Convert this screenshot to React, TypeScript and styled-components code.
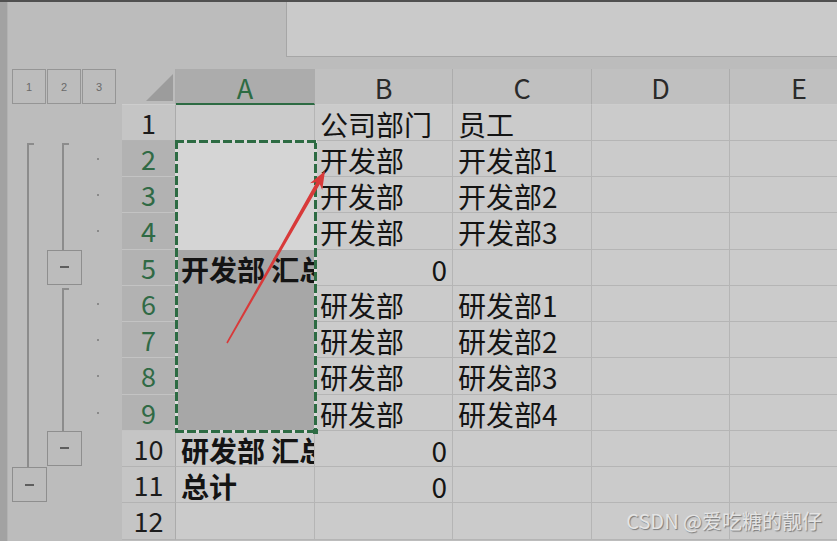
import React from 'react';
import styled, { createGlobalStyle, css } from 'styled-components';

const ROW_H = 36.25;
const HEAD_H = 35.5;
const ROWS = `${HEAD_H}px repeat(12, ${ROW_H}px)`;
const GREEN = '#2d6b43';

type Shade = 'plain' | 'active' | 'selected';

interface IRow {
	a?: string;
	b?: string;
	c?: string;
	bold?: boolean;
	numeric?: boolean;
}

const rows: IRow[] = [
	{ b: '公司部门', c: '员工' },
	{ b: '开发部', c: '开发部1' },
	{ b: '开发部', c: '开发部2' },
	{ b: '开发部', c: '开发部3' },
	{ a: '开发部 汇总', b: '0', bold: true, numeric: true },
	{ b: '研发部', c: '研发部1' },
	{ b: '研发部', c: '研发部2' },
	{ b: '研发部', c: '研发部3' },
	{ b: '研发部', c: '研发部4' },
	{ a: '研发部 汇总', b: '0', bold: true, numeric: true },
	{ a: '总计', b: '0', bold: true, numeric: true },
	{},
];

const columns = ['A', 'B', 'C', 'D', 'E'];

// rows 2..9 of column A are the selected range
const SEL_FROM = 2;
const SEL_TO = 9;

const GlobalStyle = createGlobalStyle`
  html, body {
    margin: 0;
    padding: 0;
    background: #bcbcbc;
    overflow: hidden;
  }

  body {
    font-family: "Noto Sans CJK SC", "Noto Sans", sans-serif;
  }
`;

const App: React.FC = (): JSX.Element => {
	const selected = rows.slice(SEL_FROM - 1, SEL_TO);

	return (
		<>
			<GlobalStyle/>
			<Window>
				<TopEdge/>
				<Body>
					<SideStrip/>
					<Main>
						<TopBar>
							<FormulaBox/>
						</TopBar>

						<Sheet>
							<Outline>
								<LevelButton $col={1}>1</LevelButton>
								<LevelButton $col={2}>2</LevelButton>
								<LevelButton $col={3}>3</LevelButton>

								<Rail $col={1} $from={2} $to={10}/>
								<Toggle $col={1} $row={11}><MinusBar/></Toggle>

								<Rail $col={2} $from={2} $to={4}/>
								<Toggle $col={2} $row={5}><MinusBar/></Toggle>
								<Rail $col={2} $from={6} $to={9}/>
								<Toggle $col={2} $row={10}><MinusBar/></Toggle>

								{[2, 3, 4, 6, 7, 8, 9].map((r) => <Dot key={r} $row={r}/>)}
							</Outline>

							<Table>
								<Corner><CornerMark/></Corner>
								{columns.map((c) => (
									<ColHeader key={c} $active={c === 'A'}>{c}</ColHeader>
								))}

								{rows.map((row, i) => {
									const n = i + 1;
									const inRange = n >= SEL_FROM && n <= SEL_TO;
									return (
										<React.Fragment key={n}>
											<RowHeader $active={inRange}>{n}</RowHeader>
											{
												n === SEL_FROM ?
													<SelectedBlock $span={SEL_TO - SEL_FROM + 1}>
														{selected.map((s, j) => (
															<Cell
																key={j}
																$shade={SEL_FROM + j <= 4 ? 'active' : 'selected'}
																$bold={s.bold}
															>
																{s.a}
															</Cell>
														))}
													</SelectedBlock>
													:
													inRange ? null : <Cell $bold={row.bold}>{row.a}</Cell>
											}
											<Cell $right={row.numeric}>{row.b}</Cell>
											<Cell>{row.c}</Cell>
											<Cell/>
											<Cell/>
										</React.Fragment>
									);
								})}
							</Table>
						</Sheet>
					</Main>
				</Body>

				<Arrow viewBox="0 0 837 541" width="837" height="541">
					<polygon
						fill="#d83a3a"
						points="227.7,343.4 319.8,184.2 322.2,190.1 325,171 310,183.2 316.3,182.2 226.3,342.6"
					/>
				</Arrow>

				<Watermark>CSDN @爱吃糖的靓仔</Watermark>
			</Window>
		</>
	);
};

export default App;

const Window = styled.div`
  position: relative;
  width: 837px;
  height: 541px;
  overflow: hidden;
  display: flex;
  flex-direction: column;
  background: #bcbcbc;
`;

const TopEdge = styled.div`
  height: 2px;
  flex: none;
  background: #505050;
`;

const Body = styled.div`
  flex: 1;
  display: flex;
  min-height: 0;
`;

const SideStrip = styled.div`
  width: 8px;
  flex: none;
  background: #a2a2a2;
  box-sizing: border-box;
  border-right: 1px solid #b2b2b2;
`;

const Main = styled.div`
  flex: 1;
  min-width: 0;
  display: flex;
  flex-direction: column;
`;

const TopBar = styled.div`
  height: 67px;
  flex: none;
  display: flex;
  justify-content: flex-end;
  align-items: flex-start;
`;

const FormulaBox = styled.div`
  width: 551px;
  height: 55px;
  box-sizing: border-box;
  background: #cacaca;
  border-left: 1px solid #a6a6a6;
  border-bottom: 1px solid #a6a6a6;
`;

const Sheet = styled.div`
  display: flex;
  align-items: flex-start;
`;

const Outline = styled.div`
  flex: none;
  display: grid;
  grid-template-columns: repeat(3, 35px);
  grid-template-rows: ${ROWS};
  padding: 0 5px 0 4px;
`;

const LevelButton = styled.div<{ $col: number }>`
  grid-row: 1;
  grid-column: ${(p) => p.$col};
  width: 34px;
  height: 35px;
  box-sizing: border-box;
  border: 1px solid #959595;
  display: flex;
  align-items: center;
  justify-content: center;
  font-family: "Liberation Sans", sans-serif;
  font-size: 11px;
  color: #6a6a6a;
`;

const Rail = styled.div<{ $col: number; $from: number; $to: number }>`
  grid-column: ${(p) => p.$col};
  grid-row: ${(p) => p.$from + 1} / ${(p) => p.$to + 2};
  position: relative;
  margin: 2px 0 0 15px;
  border-left: 2px solid #8c8c8c;

  &::before {
    content: '';
    position: absolute;
    left: 0;
    top: 0;
    width: 5px;
    height: 2px;
    background: #8c8c8c;
  }
`;

const Toggle = styled.div<{ $col: number; $row: number }>`
  grid-column: ${(p) => p.$col};
  grid-row: ${(p) => p.$row + 1};
  width: 35px;
  height: 35px;
  box-sizing: border-box;
  border: 1px solid #8e8e8e;
  display: flex;
  align-items: center;
  justify-content: center;
`;

const MinusBar = styled.span`
  width: 9px;
  height: 2px;
  background: #5e5e5e;
`;

const Dot = styled.div<{ $row: number }>`
  grid-column: 3;
  grid-row: ${(p) => p.$row + 1};
  align-self: center;
  width: 2px;
  height: 2px;
  margin-left: 15px;
  background: #8a8a8a;
`;

const Table = styled.div`
  flex: none;
  display: grid;
  grid-template-columns: 54px 139px 138px 139px 138px 139px;
  grid-template-rows: ${ROWS};
`;

const Corner = styled.div`
  box-sizing: border-box;
  border-right: 1px solid #ababab;
  border-bottom: 1px solid #cdcdcd;
  display: flex;
  align-items: flex-end;
  justify-content: flex-end;
  padding: 0 2px 3px 0;
`;

const CornerMark = styled.div`
  width: 0;
  height: 0;
  border-left: 27px solid transparent;
  border-bottom: 27px solid #9c9c9c;
`;

const ColHeader = styled.div<{ $active?: boolean }>`
  box-sizing: border-box;
  display: flex;
  align-items: center;
  justify-content: center;
  padding-top: 3px;
  font-size: 27px;
  color: ${(p) => (p.$active ? GREEN : '#2a2a2a')};
  background: ${(p) => (p.$active ? '#acacac' : '#c0c0c0')};
  border-right: 1px solid #acacac;
  border-bottom: ${(p) => (p.$active ? `2px solid ${GREEN}` : '1px solid #cdcdcd')};
`;

const RowHeader = styled.div<{ $active?: boolean }>`
  box-sizing: border-box;
  text-align: center;
  font-size: 27px;
  line-height: ${ROW_H}px;
  color: ${(p) => (p.$active ? '#306a45' : '#1c1c1c')};
  background: ${(p) => (p.$active ? '#b2b2b2' : '#c5c5c5')};
  border-right: 1px solid #ababab;
  border-bottom: 1px solid ${(p) => (p.$active ? '#c3c3c3' : '#b3b3b3')};
`;

const Cell = styled.div<{ $shade?: Shade; $bold?: boolean; $right?: boolean }>`
  box-sizing: border-box;
  height: ${ROW_H}px;
  padding: 2px 5px 0;
  overflow-x: clip;
  overflow-y: visible;
  white-space: nowrap;
  font-size: 28px;
  line-height: ${ROW_H - 2}px;
  color: #141414;
  text-align: ${(p) => (p.$right ? 'right' : 'left')};
  font-weight: ${(p) => (p.$bold ? 700 : 400)};
  background: ${(p) => (p.$shade === 'active' ? '#d5d5d5' : p.$shade === 'selected' ? '#a7a7a7' : '#cbcbcb')};
  border-right: 1px solid #b5b5b5;
  border-bottom: 1px solid #b5b5b5;

  ${(p) => p.$shade && p.$shade !== 'plain' && css`
    border-bottom-color: transparent;
  `}
`;

const SelectedBlock = styled.div<{ $span: number }>`
  grid-row: span ${(p) => p.$span};
  position: relative;
  display: flex;
  flex-direction: column;

  &::before {
    content: '';
    position: absolute;
    inset: -1px -2px -2px -1px;
    z-index: 1;
    pointer-events: none;
    background:
      repeating-linear-gradient(90deg, ${GREEN} 0 9px, #dadada 9px 12px) top left / 100% 3px no-repeat,
      repeating-linear-gradient(90deg, ${GREEN} 0 9px, #dadada 9px 12px) bottom left / 100% 3px no-repeat,
      repeating-linear-gradient(180deg, ${GREEN} 0 9px, #dadada 9px 12px) top left / 3px 100% no-repeat,
      repeating-linear-gradient(180deg, ${GREEN} 0 9px, #dadada 9px 12px) top right / 3px 100% no-repeat;
  }

  &::after {
    content: '';
    position: absolute;
    right: -3px;
    bottom: -3px;
    z-index: 1;
    width: 5px;
    height: 5px;
    background: ${GREEN};
  }
`;

const Arrow = styled.svg`
  position: absolute;
  left: 0;
  top: 0;
  z-index: 2;
  pointer-events: none;
`;

const Watermark = styled.div`
  position: absolute;
  right: 15px;
  bottom: 6px;
  z-index: 2;
  font-size: 20px;
  color: #e4e4e4;
  text-shadow: 1px 1px 1px rgba(0, 0, 0, 0.4);
  white-space: nowrap;
`;
